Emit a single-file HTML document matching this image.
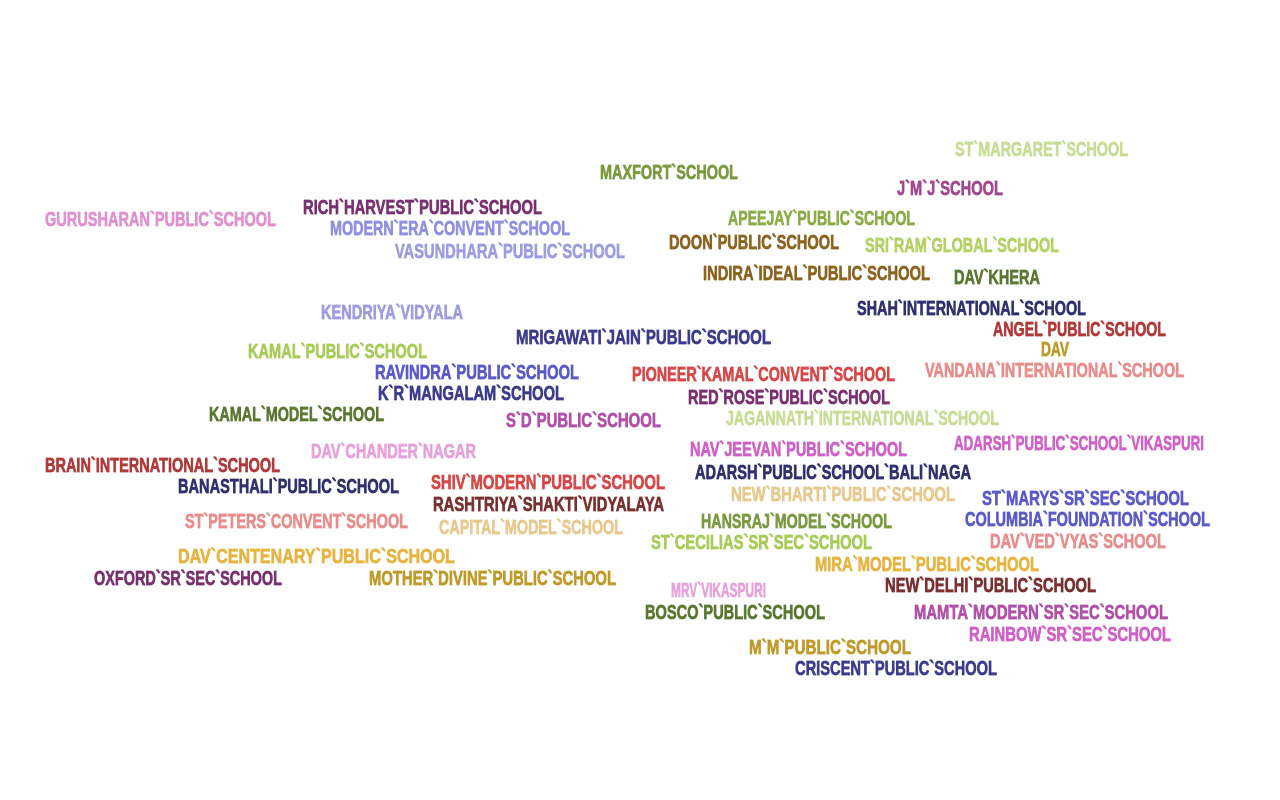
<!DOCTYPE html>
<html><head><meta charset="utf-8"><style>
html,body{margin:0;padding:0;background:#fff;width:1280px;height:800px;overflow:hidden}
svg text{font-family:"Liberation Sans Narrow","Liberation Sans",sans-serif;font-weight:bold;font-size:20px;stroke-width:0.7px;paint-order:stroke}
</style></head><body>
<svg width="1280" height="800" xmlns="http://www.w3.org/2000/svg">
<g transform="translate(0,1)">
<text x="955" y="155" textLength="173" lengthAdjust="spacingAndGlyphs" fill="#c8dc96" stroke="#c8dc96">ST`MARGARET`SCHOOL</text>
<text x="600" y="178" textLength="138" lengthAdjust="spacingAndGlyphs" fill="#7a9a40" stroke="#7a9a40">MAXFORT`SCHOOL</text>
<text x="897" y="194" textLength="106" lengthAdjust="spacingAndGlyphs" fill="#a04890" stroke="#a04890">J`M`J`SCHOOL</text>
<text x="303" y="213" textLength="239" lengthAdjust="spacingAndGlyphs" fill="#7a3070" stroke="#7a3070">RICH`HARVEST`PUBLIC`SCHOOL</text>
<text x="45" y="225" textLength="231" lengthAdjust="spacingAndGlyphs" fill="#e090d0" stroke="#e090d0">GURUSHARAN`PUBLIC`SCHOOL</text>
<text x="728" y="224" textLength="187" lengthAdjust="spacingAndGlyphs" fill="#8cac48" stroke="#8cac48">APEEJAY`PUBLIC`SCHOOL</text>
<text x="330" y="234" textLength="240" lengthAdjust="spacingAndGlyphs" fill="#9090e0" stroke="#9090e0">MODERN`ERA`CONVENT`SCHOOL</text>
<text x="669" y="248" textLength="170" lengthAdjust="spacingAndGlyphs" fill="#8c6420" stroke="#8c6420">DOON`PUBLIC`SCHOOL</text>
<text x="865" y="251" textLength="194" lengthAdjust="spacingAndGlyphs" fill="#b4d264" stroke="#b4d264">SRI`RAM`GLOBAL`SCHOOL</text>
<text x="395" y="257" textLength="230" lengthAdjust="spacingAndGlyphs" fill="#9c9ce0" stroke="#9c9ce0">VASUNDHARA`PUBLIC`SCHOOL</text>
<text x="703" y="279" textLength="227" lengthAdjust="spacingAndGlyphs" fill="#8c6420" stroke="#8c6420">INDIRA`IDEAL`PUBLIC`SCHOOL</text>
<text x="954" y="283" textLength="86" lengthAdjust="spacingAndGlyphs" fill="#5a7830" stroke="#5a7830">DAV`KHERA</text>
<text x="857" y="314" textLength="229" lengthAdjust="spacingAndGlyphs" fill="#30306e" stroke="#30306e">SHAH`INTERNATIONAL`SCHOOL</text>
<text x="321" y="318" textLength="142" lengthAdjust="spacingAndGlyphs" fill="#9c9ce0" stroke="#9c9ce0">KENDRIYA`VIDYALA</text>
<text x="993" y="335" textLength="173" lengthAdjust="spacingAndGlyphs" fill="#b03a3a" stroke="#b03a3a">ANGEL`PUBLIC`SCHOOL</text>
<text x="516" y="343" textLength="255" lengthAdjust="spacingAndGlyphs" fill="#3c3c8c" stroke="#3c3c8c">MRIGAWATI`JAIN`PUBLIC`SCHOOL</text>
<text x="1041" y="355" textLength="28" lengthAdjust="spacingAndGlyphs" fill="#c09a28" stroke="#c09a28">DAV</text>
<text x="248" y="357" textLength="179" lengthAdjust="spacingAndGlyphs" fill="#a8cc58" stroke="#a8cc58">KAMAL`PUBLIC`SCHOOL</text>
<text x="375" y="378" textLength="204" lengthAdjust="spacingAndGlyphs" fill="#5a5ac8" stroke="#5a5ac8">RAVINDRA`PUBLIC`SCHOOL</text>
<text x="632" y="380" textLength="263" lengthAdjust="spacingAndGlyphs" fill="#d64848" stroke="#d64848">PIONEER`KAMAL`CONVENT`SCHOOL</text>
<text x="925" y="376" textLength="259" lengthAdjust="spacingAndGlyphs" fill="#e88c8c" stroke="#e88c8c">VANDANA`INTERNATIONAL`SCHOOL</text>
<text x="378" y="399" textLength="186" lengthAdjust="spacingAndGlyphs" fill="#3c3c8c" stroke="#3c3c8c">K`R`MANGALAM`SCHOOL</text>
<text x="688" y="403" textLength="202" lengthAdjust="spacingAndGlyphs" fill="#7a3070" stroke="#7a3070">RED`ROSE`PUBLIC`SCHOOL</text>
<text x="209" y="420" textLength="175" lengthAdjust="spacingAndGlyphs" fill="#5a7830" stroke="#5a7830">KAMAL`MODEL`SCHOOL</text>
<text x="726" y="424" textLength="273" lengthAdjust="spacingAndGlyphs" fill="#c8dc96" stroke="#c8dc96">JAGANNATH`INTERNATIONAL`SCHOOL</text>
<text x="506" y="426" textLength="155" lengthAdjust="spacingAndGlyphs" fill="#b050a8" stroke="#b050a8">S`D`PUBLIC`SCHOOL</text>
<text x="954" y="449" textLength="250" lengthAdjust="spacingAndGlyphs" fill="#d060c8" stroke="#d060c8">ADARSH`PUBLIC`SCHOOL`VIKASPURI</text>
<text x="690" y="455" textLength="217" lengthAdjust="spacingAndGlyphs" fill="#d060c8" stroke="#d060c8">NAV`JEEVAN`PUBLIC`SCHOOL</text>
<text x="311" y="457" textLength="165" lengthAdjust="spacingAndGlyphs" fill="#e8a0dc" stroke="#e8a0dc">DAV`CHANDER`NAGAR</text>
<text x="45" y="471" textLength="235" lengthAdjust="spacingAndGlyphs" fill="#b03a3a" stroke="#b03a3a">BRAIN`INTERNATIONAL`SCHOOL</text>
<text x="695" y="478" textLength="276" lengthAdjust="spacingAndGlyphs" fill="#30306e" stroke="#30306e">ADARSH`PUBLIC`SCHOOL`BALI`NAGA</text>
<text x="431" y="488" textLength="234" lengthAdjust="spacingAndGlyphs" fill="#d64848" stroke="#d64848">SHIV`MODERN`PUBLIC`SCHOOL</text>
<text x="178" y="492" textLength="221" lengthAdjust="spacingAndGlyphs" fill="#30306e" stroke="#30306e">BANASTHALI`PUBLIC`SCHOOL</text>
<text x="731" y="500" textLength="224" lengthAdjust="spacingAndGlyphs" fill="#e8c88c" stroke="#e8c88c">NEW`BHARTI`PUBLIC`SCHOOL</text>
<text x="982" y="504" textLength="207" lengthAdjust="spacingAndGlyphs" fill="#5a5ac8" stroke="#5a5ac8">ST`MARYS`SR`SEC`SCHOOL</text>
<text x="433" y="510" textLength="231" lengthAdjust="spacingAndGlyphs" fill="#7a3030" stroke="#7a3030">RASHTRIYA`SHAKTI`VIDYALAYA</text>
<text x="965" y="525" textLength="245" lengthAdjust="spacingAndGlyphs" fill="#5a5ac8" stroke="#5a5ac8">COLUMBIA`FOUNDATION`SCHOOL</text>
<text x="185" y="527" textLength="223" lengthAdjust="spacingAndGlyphs" fill="#e88c8c" stroke="#e88c8c">ST`PETERS`CONVENT`SCHOOL</text>
<text x="701" y="527" textLength="191" lengthAdjust="spacingAndGlyphs" fill="#7a9a40" stroke="#7a9a40">HANSRAJ`MODEL`SCHOOL</text>
<text x="439" y="533" textLength="184" lengthAdjust="spacingAndGlyphs" fill="#e8c88c" stroke="#e8c88c">CAPITAL`MODEL`SCHOOL</text>
<text x="990" y="547" textLength="176" lengthAdjust="spacingAndGlyphs" fill="#e88c8c" stroke="#e88c8c">DAV`VED`VYAS`SCHOOL</text>
<text x="651" y="548" textLength="221" lengthAdjust="spacingAndGlyphs" fill="#a8cc58" stroke="#a8cc58">ST`CECILIAS`SR`SEC`SCHOOL</text>
<text x="178" y="562" textLength="277" lengthAdjust="spacingAndGlyphs" fill="#e8b440" stroke="#e8b440">DAV`CENTENARY`PUBLIC`SCHOOL</text>
<text x="815" y="570" textLength="224" lengthAdjust="spacingAndGlyphs" fill="#e8b440" stroke="#e8b440">MIRA`MODEL`PUBLIC`SCHOOL</text>
<text x="94" y="584" textLength="188" lengthAdjust="spacingAndGlyphs" fill="#7a3070" stroke="#7a3070">OXFORD`SR`SEC`SCHOOL</text>
<text x="369" y="584" textLength="247" lengthAdjust="spacingAndGlyphs" fill="#c09a28" stroke="#c09a28">MOTHER`DIVINE`PUBLIC`SCHOOL</text>
<text x="885" y="591" textLength="211" lengthAdjust="spacingAndGlyphs" fill="#7a3030" stroke="#7a3030">NEW`DELHI`PUBLIC`SCHOOL</text>
<text x="671" y="596" textLength="95" lengthAdjust="spacingAndGlyphs" fill="#e8a0dc" stroke="#e8a0dc">MRV`VIKASPURI</text>
<text x="645" y="618" textLength="180" lengthAdjust="spacingAndGlyphs" fill="#5a7830" stroke="#5a7830">BOSCO`PUBLIC`SCHOOL</text>
<text x="914" y="618" textLength="254" lengthAdjust="spacingAndGlyphs" fill="#b050a8" stroke="#b050a8">MAMTA`MODERN`SR`SEC`SCHOOL</text>
<text x="969" y="640" textLength="202" lengthAdjust="spacingAndGlyphs" fill="#d060c8" stroke="#d060c8">RAINBOW`SR`SEC`SCHOOL</text>
<text x="749" y="653" textLength="162" lengthAdjust="spacingAndGlyphs" fill="#c09a28" stroke="#c09a28">M`M`PUBLIC`SCHOOL</text>
<text x="795" y="674" textLength="202" lengthAdjust="spacingAndGlyphs" fill="#3c3c8c" stroke="#3c3c8c">CRISCENT`PUBLIC`SCHOOL</text>
</g>
</svg>
</body></html>
